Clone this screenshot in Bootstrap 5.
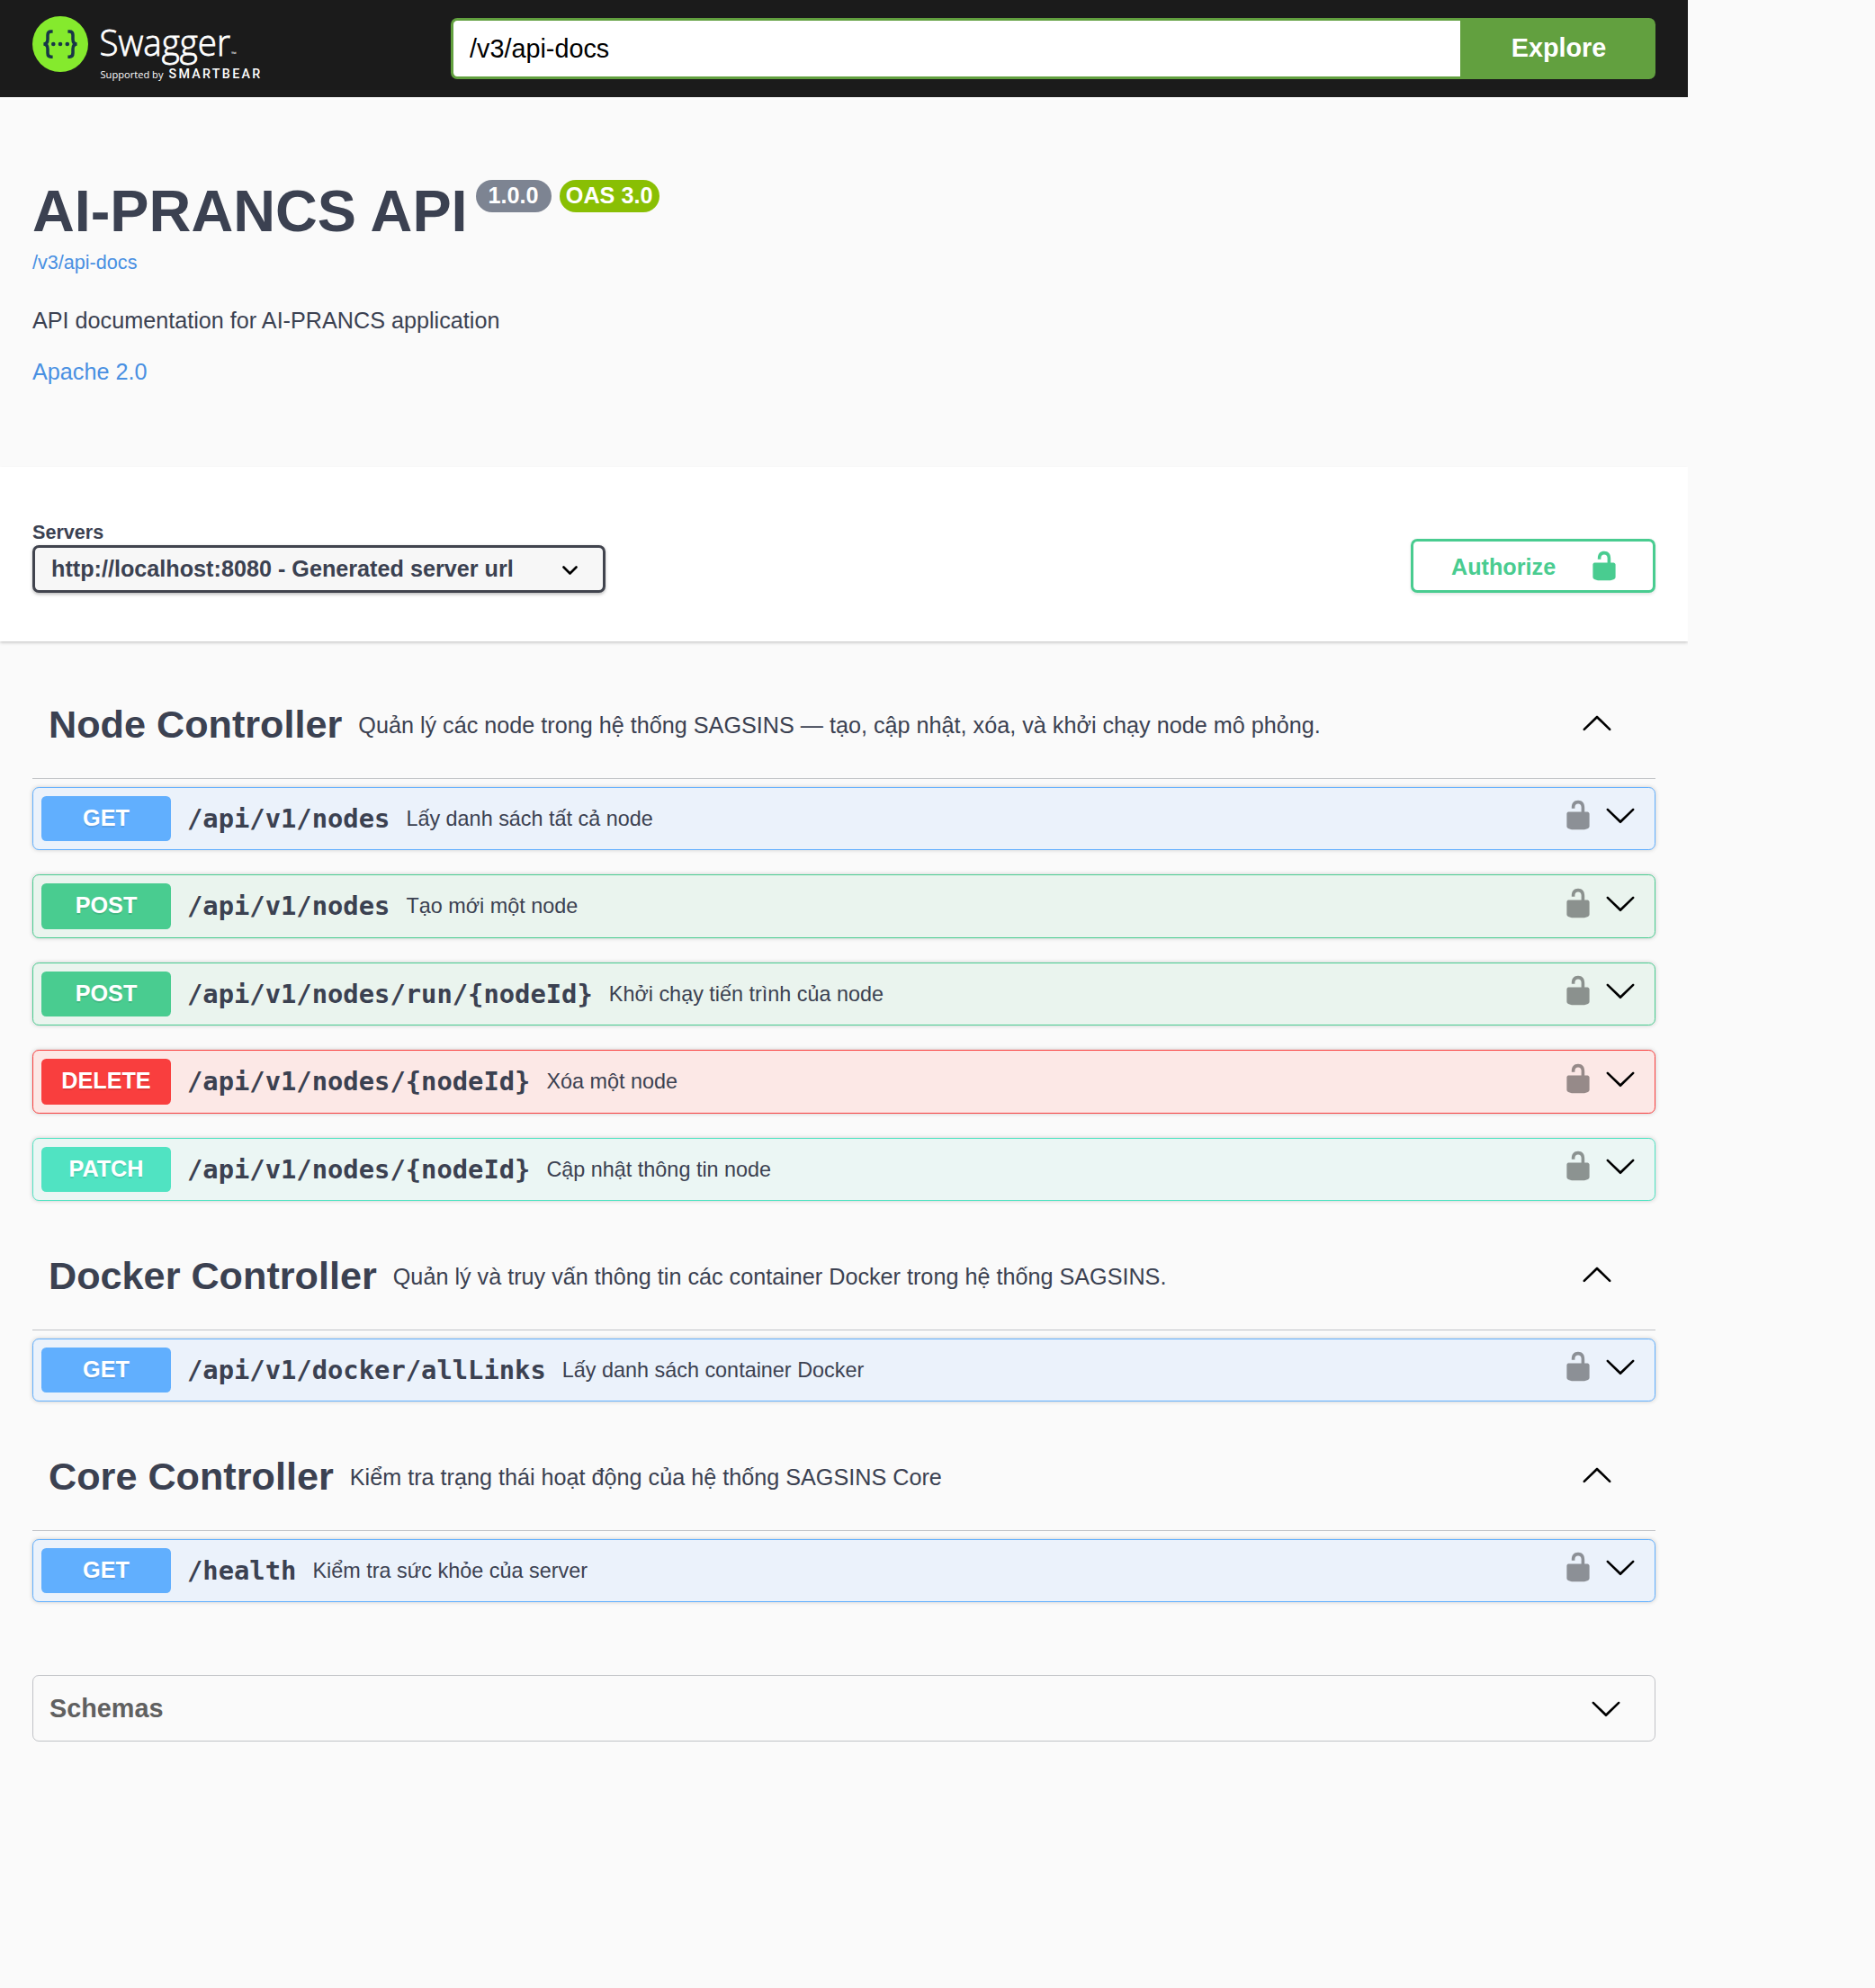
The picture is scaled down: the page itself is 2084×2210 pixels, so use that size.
<!DOCTYPE html>
<html lang="vi">
<head>
<meta charset="utf-8">
<title>Swagger UI</title>
<meta name="viewport" content="width=device-width, initial-scale=1">
<link rel="stylesheet" href="https://cdn.jsdelivr.net/npm/bootstrap@5.3.0/dist/css/bootstrap.min.css">
<style>
  body { background:#fafafa; color:#3b4151; font-family:"Liberation Sans",Arial,sans-serif; font-size:25.2px; line-height:36px; }
  .swagger-page { width:1876px; overflow:hidden; }
  .px-page { padding-left:36px; padding-right:36px; }
  svg { display:block; flex:none; }
  .ico { width:36px; height:36px; }

  .topbar { background:#1b1b1b; height:108px; padding-top:20px; padding-bottom:20px; }
  .brand-logo { width:270px; height:108px; margin:-20px 0; }
  .spec-form { width:1339px; height:68px; }
  .spec-form .form-control { border:3px solid #62a03f; border-right:0; border-radius:7.2px 0 0 7.2px; padding:0 18px; font-size:28.8px; color:#000; background:#fff; height:68px; }
  .spec-form .btn { width:217px; background:#62a03f; color:#fff; font-size:28.8px; font-weight:700; border:0; border-radius:0 7.2px 7.2px 0; padding:0 0 2px 2px; line-height:64px; }

  .api-info { height:411px; padding-top:92px; }
  .api-title { font-size:64.8px; line-height:70px; height:78.5px; font-weight:700; margin:0; }
  .tag-pill { height:36px; border-radius:18px; color:#fff; font-size:25.2px; line-height:34px; font-weight:700; }
  .tag-version { background:#7d8492; padding:0 14px; margin-left:9px; }
  .tag-oas { background:#89bf04; padding:0 7.2px; margin-left:9px; }
  .api-info a { color:#4990e2; text-decoration:none; }
  .spec-link { font-size:21.6px; line-height:26px; }
  .api-desc { margin:33px 0 21px; }

  .scheme-bar { background:#fff; height:194px; padding-top:60px; padding-bottom:54px; box-shadow:0 1.8px 3.6px rgba(0,0,0,.22); }
  .server-label { font-size:21.6px; line-height:25px; font-weight:700; margin-bottom:2px; }
  .server-select { width:637px; height:53px; border:3px solid #41444e; border-radius:7.2px; background:#f7f7f7; color:#3b4151; font-weight:700; font-size:25.2px; line-height:45px; padding:0 28px 0 18px; box-shadow:0 1.8px 3.6px rgba(0,0,0,.25); }
  .server-select svg { margin-top:2px; }
  .btn-authorize { width:272px; height:60px; border:3px solid #49cc90; border-radius:7.2px; color:#49cc90; font-weight:700; font-size:25.2px; padding:0 36.4px 0 42px; box-shadow:0 1.8px 3.6px rgba(0,0,0,.1); }
  .btn-authorize span { padding-top:2px; }

  .op-sections { padding-top:34.5px; }
  .tag-head { height:118px; border-bottom:1px solid rgba(59,65,81,.3); padding:0 47.5px 0 18px; margin-bottom:9px; }
  .tag-head h3 { font-size:43.2px; line-height:52px; font-weight:700; margin:-2px 18px 0 0; }
  .tag-head span { margin-top:-1px; }
  .tag-head .ico { margin-top:-7px; }
  .op-section + .op-section { margin-top:25.6px; }

  .op { height:70.5px; border:1px solid var(--c); background:var(--bg); border-radius:7.2px; padding:9px 20.5px 9px 9px; box-shadow:0 0 5.4px rgba(0,0,0,.19); }
  .op + .op { margin-top:27px; }
  .op-get { --c:#61affe; --bg:#ebf2fb; }
  .op-post { --c:#49cc90; --bg:#eaf4ee; }
  .op-delete { --c:#f93e3e; --bg:#fce8e6; }
  .op-patch { --c:#50e3c2; --bg:#ebf6f4; }
  .op-method { width:144px; height:50.5px; line-height:49.5px; background:var(--c); color:#fff; font-weight:700; text-align:center; border-radius:5.4px; text-shadow:0 1.8px 0 rgba(0,0,0,.1); }
  .op-path { font-family:"DejaVu Sans Mono",monospace; font-weight:700; font-size:28.8px; padding:0 18px; }
  .op-text { font-size:23.4px; }
  .op-icons { gap:10.9px; padding-bottom:7px; }
  .op-icons .lock { opacity:.4; }

  .schemas { margin-top:81px; height:74px; border:1px solid rgba(59,65,81,.3); border-radius:7.2px; padding:0 36.2px 0 18px; font-size:28.8px; font-weight:700; color:#606060; }
</style>
<script src="https://cdn.jsdelivr.net/npm/bootstrap@5.3.0/dist/js/bootstrap.bundle.min.js"></script>
</head>
<body>
<svg width="0" height="0" class="position-absolute" aria-hidden="true">
  <symbol id="unlocked" viewBox="0 0 20 20"><path d="M15.8 8H14V5.6C14 2.703 12.665 1 10 1 7.334 1 6 2.703 6 5.6V6h2v-.801C8 3.754 8.797 3 10 3c1.203 0 2 .754 2 2.199V8H4c-.553 0-1 .646-1 1.199V17c0 .549.428 1.139.951 1.307l1.197.387C5.672 18.861 6.55 19 7.1 19h5.8c.549 0 1.428-.139 1.951-.307l1.196-.387c.524-.167.953-.757.953-1.306V9.199C17 8.646 16.352 8 15.8 8z"/></symbol>
  <symbol id="arrow-up" viewBox="0 0 20 20"><path d="M17.418 14.908c.272.268.709.268.979 0s.271-.701 0-.969l-7.908-7.83c-.27-.268-.707-.268-.979 0l-7.908 7.83c-.27.268-.27.701 0 .969.271.268.709.268.979 0L10 7.767l7.418 7.141z"/></symbol>
  <symbol id="arrow-down" viewBox="0 0 20 20"><path d="M17.418 6.109c.272-.268.709-.268.979 0s.271.701 0 .969l-7.908 7.83c-.27.268-.707.268-.979 0l-7.908-7.83c-.27-.268-.27-.701 0-.969.271-.268.709-.268.979 0L10 13.25l7.418-7.141z"/></symbol>
</svg>

<div class="swagger-page">
  <header class="topbar px-page d-flex justify-content-between">
    <svg class="brand-logo" viewBox="36 0 270 108" role="img" aria-label="Swagger">
      <circle cx="67" cy="49" r="31" fill="#85ea2d"/>
      <g fill="none" stroke="#173647" stroke-width="3.5">
        <path d="M58.6 35h-1.8c-2.6 0-3.8 1.4-3.8 4v4.5c0 3.500-1.200 5.500-4.600 5.500 3.400 0 4.600 2 4.600 5.500V59c0 2.700 1.200 4.200 3.800 4.200h1.800"/>
        <path d="M75.400 35h1.800c2.600 0 3.800 1.400 3.800 4v4.500c0 3.500 1.200 5.500 4.600 5.500-3.400 0-4.600 2-4.600 5.500V59c0 2.700-1.200 4.200-3.800 4.200h-1.800"/>
      </g>
      <g fill="#173647"><circle cx="59.300" cy="49" r="2.300"/><circle cx="67" cy="49" r="2.300"/><circle cx="74.800" cy="49" r="2.300"/></g>
      <g fill="#fff" font-family="'Open Sans',sans-serif">
        <text x="110.500" y="62" font-size="39.500" font-weight="300" stroke="#fff" stroke-width=".8" textLength="145.500" lengthAdjust="spacingAndGlyphs">Swagger</text>
        <text x="257" y="62" font-size="6" textLength="6" lengthAdjust="spacingAndGlyphs">™</text>
        <text x="111.500" y="87" font-size="11.500" textLength="70" lengthAdjust="spacingAndGlyphs">Supported by</text>
        <text x="187.500" y="87" font-size="15" font-weight="500" font-family="Roboto,sans-serif" letter-spacing="2.400" textLength="104" lengthAdjust="spacingAndGlyphs">SMARTBEAR</text>
      </g>
    </svg>
    <form class="spec-form d-flex">
      <input class="form-control flex-fill" type="text" value="/v3/api-docs" aria-label="Spec">
      <button class="btn flex-shrink-0" type="button">Explore</button>
    </form>
  </header>

  <section class="api-info px-page">
    <div class="d-flex align-items-start">
      <h2 class="api-title">AI-PRANCS API</h2>
      <span class="tag-pill tag-version">1.0.0</span>
      <span class="tag-pill tag-oas">OAS 3.0</span>
    </div>
    <a href="#" class="spec-link d-block">/v3/api-docs</a>
    <p class="api-desc">API documentation for AI-PRANCS application</p>
    <a href="#" class="d-block">Apache 2.0</a>
  </section>

  <section class="scheme-bar px-page d-flex justify-content-between align-items-end">
    <div>
      <div class="server-label">Servers</div>
      <button type="button" class="server-select d-flex justify-content-between align-items-center">http://localhost:8080 - Generated server url
        <svg width="17" height="10" viewBox="0 0 17 10" fill="none" stroke="#000" stroke-width="2.600" stroke-linecap="round" stroke-linejoin="round"><path d="M1.500 1.500l7 7 7-7"/></svg>
      </button>
    </div>
    <button type="button" class="btn-authorize bg-white d-flex justify-content-between align-items-center"><span>Authorize</span><svg class="ico" fill="#49cc90"><use href="#unlocked"/></svg></button>
  </section>

  <main class="op-sections px-page">
    <section class="op-section">
      <div class="tag-head d-flex align-items-center"><h3>Node Controller</h3><span>Quản lý các node trong hệ thống SAGSINS — tạo, cập nhật, xóa, và khởi chạy node mô phỏng.</span><svg class="ico ms-auto"><use href="#arrow-up"/></svg></div>
      <div class="op op-get d-flex align-items-center"><span class="op-method">GET</span><span class="op-path">/api/v1/nodes</span><span class="op-text">Lấy danh sách tất cả node</span><span class="op-icons d-flex ms-auto"><svg class="ico lock"><use href="#unlocked"/></svg><svg class="ico"><use href="#arrow-down"/></svg></span></div>
      <div class="op op-post d-flex align-items-center"><span class="op-method">POST</span><span class="op-path">/api/v1/nodes</span><span class="op-text">Tạo mới một node</span><span class="op-icons d-flex ms-auto"><svg class="ico lock"><use href="#unlocked"/></svg><svg class="ico"><use href="#arrow-down"/></svg></span></div>
      <div class="op op-post d-flex align-items-center"><span class="op-method">POST</span><span class="op-path">/api/v1/nodes/run/{nodeId}</span><span class="op-text">Khởi chạy tiến trình của node</span><span class="op-icons d-flex ms-auto"><svg class="ico lock"><use href="#unlocked"/></svg><svg class="ico"><use href="#arrow-down"/></svg></span></div>
      <div class="op op-delete d-flex align-items-center"><span class="op-method">DELETE</span><span class="op-path">/api/v1/nodes/{nodeId}</span><span class="op-text">Xóa một node</span><span class="op-icons d-flex ms-auto"><svg class="ico lock"><use href="#unlocked"/></svg><svg class="ico"><use href="#arrow-down"/></svg></span></div>
      <div class="op op-patch d-flex align-items-center"><span class="op-method">PATCH</span><span class="op-path">/api/v1/nodes/{nodeId}</span><span class="op-text">Cập nhật thông tin node</span><span class="op-icons d-flex ms-auto"><svg class="ico lock"><use href="#unlocked"/></svg><svg class="ico"><use href="#arrow-down"/></svg></span></div>
    </section>
    <section class="op-section">
      <div class="tag-head d-flex align-items-center"><h3>Docker Controller</h3><span>Quản lý và truy vấn thông tin các container Docker trong hệ thống SAGSINS.</span><svg class="ico ms-auto"><use href="#arrow-up"/></svg></div>
      <div class="op op-get d-flex align-items-center"><span class="op-method">GET</span><span class="op-path">/api/v1/docker/allLinks</span><span class="op-text">Lấy danh sách container Docker</span><span class="op-icons d-flex ms-auto"><svg class="ico lock"><use href="#unlocked"/></svg><svg class="ico"><use href="#arrow-down"/></svg></span></div>
    </section>
    <section class="op-section">
      <div class="tag-head d-flex align-items-center"><h3>Core Controller</h3><span>Kiểm tra trạng thái hoạt động của hệ thống SAGSINS Core</span><svg class="ico ms-auto"><use href="#arrow-up"/></svg></div>
      <div class="op op-get d-flex align-items-center"><span class="op-method">GET</span><span class="op-path">/health</span><span class="op-text">Kiểm tra sức khỏe của server</span><span class="op-icons d-flex ms-auto"><svg class="ico lock"><use href="#unlocked"/></svg><svg class="ico"><use href="#arrow-down"/></svg></span></div>
    </section>
    <section class="schemas d-flex justify-content-between align-items-center">Schemas<svg class="ico" fill="#000"><use href="#arrow-down"/></svg></section>
  </main>
</div>
</body>
</html>
